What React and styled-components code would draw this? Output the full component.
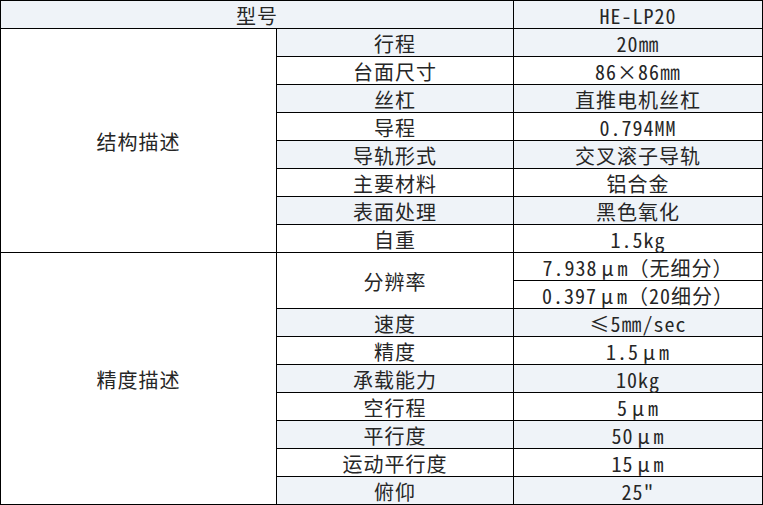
import React from "react";
import styled, { createGlobalStyle } from "styled-components";

const GlobalStyle = createGlobalStyle`
  html, body {
    margin: 0;
    padding: 0;
    background: #ffffff;
  }
`;

const Table = styled.div`
  width: 763px;
  box-sizing: border-box;
  display: grid;
  grid-template-columns: 275px 236px 248px;
  grid-auto-rows: 27px;
  gap: 1px;
  padding: 1px;
  background: #000000;
  font-family: "Noto Sans CJK SC", "Noto Sans", sans-serif;
  font-size: 20px;
  color: #262626;
`;

const Cell = styled.div`
  display: flex;
  align-items: center;
  justify-content: center;
  background: ${props => (props.shaded ? "#eff3f8" : "#ffffff")};
  grid-column: ${props => (props.cols ? `span ${props.cols}` : "auto")};
  grid-row: ${props => (props.rows ? `span ${props.rows}` : "auto")};
  line-height: 1;
  padding-top: 3px;
  box-sizing: border-box;
  white-space: nowrap;
  letter-spacing: 1px;
`;

// ascii runs in half-width, greek mu in a full-width box, like a CJK font would draw them
const Half = styled.span`
  font-feature-settings: "hwid";
`;

const Full = styled.span`
  display: inline-block;
  width: 1em;
  text-align: center;
  letter-spacing: 0;
`;

const Text = ({ children }) => {
  const parts = children.match(/[\x20-\x7e]+|μ|[^\x20-\x7eμ]+/g) || [];
  return parts.map((p, i) => {
    if (/^[\x20-\x7e]+$/.test(p)) return <Half key={i}>{p}</Half>;
    if (p === "μ") return <Full key={i}>{p}</Full>;
    return <span key={i}>{p}</span>;
  });
};

const sections = [
  {
    name: "结构描述",
    items: [
      ["行程", "20㎜"],
      ["台面尺寸", "86×86㎜"],
      ["丝杠", "直推电机丝杠"],
      ["导程", "0.794MM"],
      ["导轨形式", "交叉滚子导轨"],
      ["主要材料", "铝合金"],
      ["表面处理", "黑色氧化"],
      ["自重", "1.5kg"],
    ],
  },
  {
    name: "精度描述",
    items: [
      ["分辨率", ["7.938μm（无细分）", "0.397μm（20细分）"]],
      ["速度", "≤5㎜/sec"],
      ["精度", "1.5μm"],
      ["承载能力", "10kg"],
      ["空行程", "5μm"],
      ["平行度", "50μm"],
      ["运动平行度", "15μm"],
      ["俯仰", "25\""],
    ],
  },
];

const App = () => {
  let row = 0;
  const cells = [];
  sections.forEach(sec => {
    const span = sec.items.reduce((n, it) => n + (Array.isArray(it[1]) ? it[1].length : 1), 0);
    cells.push(<Cell key={sec.name} rows={span}>{sec.name}</Cell>);
    sec.items.forEach(([label, value]) => {
      if (Array.isArray(value)) {
        row += 1;
        cells.push(<Cell key={label} rows={value.length}>{label}</Cell>);
        value.forEach(v => cells.push(<Cell key={v}><Text>{v}</Text></Cell>));
        row += value.length - 1;
      } else {
        row += 1;
        const shaded = row % 2 === 1;
        cells.push(<Cell key={label} shaded={shaded}>{label}</Cell>);
        cells.push(<Cell key={label + "v"} shaded={shaded}><Text>{value}</Text></Cell>);
      }
    });
  });

  return (
    <>
      <GlobalStyle />
      <Table>
        <Cell cols={2} shaded>型号</Cell>
        <Cell shaded><Text>HE-LP20</Text></Cell>
        {cells}
      </Table>
    </>
  );
};

export default App;
